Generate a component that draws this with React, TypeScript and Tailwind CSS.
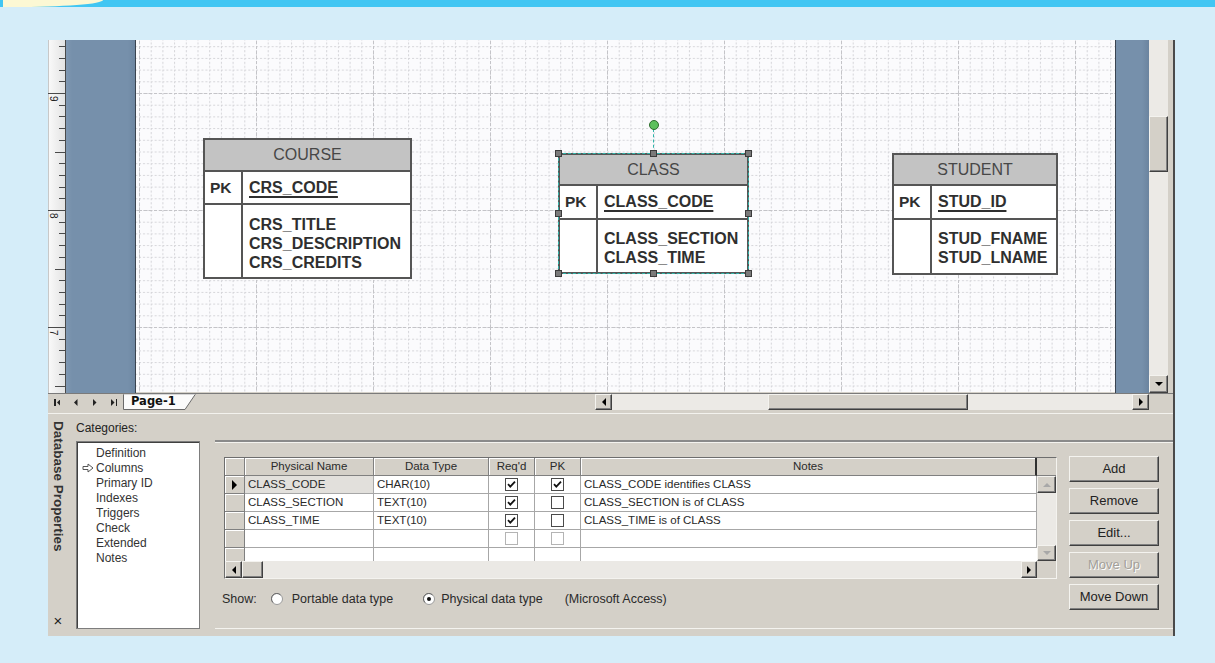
import React from "react";

const UI = "font-[family-name:'Liberation_Sans',Arial,sans-serif]";

/* ---------- small drawing helpers ---------- */

function Tri({ dir, color = "#000", s = 4 }: { dir: "up" | "down" | "left" | "right"; color?: string; s?: number }) {
  const pts =
    dir === "down"
      ? `0,0 ${2 * s},0 ${s},${s}`
      : dir === "up"
      ? `0,${s} ${2 * s},${s} ${s},0`
      : dir === "right"
      ? `0,0 ${s},${s} 0,${2 * s}`
      : `${s},0 0,${s} ${s},${2 * s}`;
  const w = dir === "up" || dir === "down" ? 2 * s : s;
  const h = dir === "up" || dir === "down" ? s : 2 * s;
  return (
    <svg width={w} height={h} className="block">
      <polygon points={pts} fill={color} />
    </svg>
  );
}

function Btn3d({ className = "", children }: { className?: string; children?: React.ReactNode }) {
  return (
    <div
      className={`flex items-center justify-center bg-[#d4d0c8] border border-t-[#f4f3ef] border-l-[#f4f3ef] border-r-[#404040] border-b-[#404040] shadow-[inset_-1px_-1px_0_#808080] ${className}`}
    >
      {children}
    </div>
  );
}

/* ---------- vertical ruler ---------- */

function Ruler() {
  const ticks: React.ReactNode[] = [];
  const base = 53;
  for (let i = -5; i <= 27; i++) {
    const y = Math.round(base + i * 11.7) + 0.5;
    if (y < 0 || y > 353) continue;
    const m = ((i % 10) + 10) % 10;
    const x1 = m === 0 ? 0 : m === 5 ? 7 : 11;
    ticks.push(<line key={i} x1={x1} x2={17} y1={y} y2={y} stroke="#4a4a4a" />);
  }
  const labels = [
    { y: 56, t: "9" },
    { y: 173, t: "8" },
    { y: 290, t: "7" },
  ];
  return (
    <svg width="18" height="353" className="block shrink-0">
      <defs>
        <linearGradient id="rulerFill" x1="0" x2="1">
          <stop offset="0" stopColor="#fafafa" />
          <stop offset="1" stopColor="#e2e2e2" />
        </linearGradient>
      </defs>
      <rect width="18" height="353" fill="url(#rulerFill)" />
      <line x1="0.5" x2="0.5" y1="0" y2="353" stroke="#c8c8c8" />
      <line x1="17.5" x2="17.5" y1="0" y2="353" stroke="#4a4a4a" />
      {ticks}
      {labels.map((l) => (
        <text
          key={l.t}
          x={2}
          y={l.y}
          fontSize="10"
          fill="#222"
          fontFamily="Liberation Sans, Arial, sans-serif"
          transform={`rotate(90 2 ${l.y})`}
        >
          {l.t}
        </text>
      ))}
    </svg>
  );
}

/* ---------- drawing page grid ---------- */

function PageGrid() {
  return (
    <svg className="absolute inset-0" width="979" height="352">
      <defs>
        <pattern id="minorGrid" width="11.7" height="11.7" x="3" y="53" patternUnits="userSpaceOnUse">
          <path d="M0 0.5H11.7M0.5 0V11.7" stroke="#d4d4d8" strokeDasharray="2 2" fill="none" />
        </pattern>
        <pattern id="majorGrid" width="117" height="117" x="3" y="53" patternUnits="userSpaceOnUse">
          <path d="M0 0.5H117M0.5 0V117" stroke="#c4c4c8" strokeDasharray="3 2" fill="none" />
        </pattern>
      </defs>
      <rect width="979" height="352" fill="#fbfbfd" />
      <rect width="979" height="352" fill="url(#minorGrid)" />
      <rect width="979" height="352" fill="url(#majorGrid)" />
    </svg>
  );
}

/* ---------- entity box ---------- */

type EntityProps = {
  name: string;
  pk: string;
  attrs: string[];
  left: string;
  top: string;
  width: string;
  height: string;
  headH: string;
  pkH: string;
  pkColW: string;
  attrPad: string;
  selected?: boolean;
};

function Handle({ className }: { className: string }) {
  return <div className={`absolute h-[7px] w-[7px] bg-[#7a7a7a] border border-[#3c3c3c] ${className}`} />;
}

function Entity(p: EntityProps) {
  return (
    <div className={`absolute ${p.left} ${p.top} ${p.width} ${p.height}`}>
      <div className="flex h-full w-full flex-col border-2 border-[#555] bg-white text-[#2f2f2f]">
        <div className={`${p.headH} flex items-center justify-center border-b-2 border-[#555] bg-[#c3c3c3] text-[16px] text-[#474747]`}>
          {p.name}
        </div>
        <div className={`${p.pkH} flex border-b-2 border-[#555]`}>
          <div className={`${p.pkColW} flex items-center border-r-2 border-[#555] pl-[5px] text-[15.5px] font-bold`}>PK</div>
          <div className="flex items-center pl-[6px] text-[16px] font-bold underline decoration-2 underline-offset-[3px]">
            {p.pk}
          </div>
        </div>
        <div className="flex flex-1">
          <div className={`${p.pkColW} border-r-2 border-[#555]`} />
          <div className={`flex flex-col pl-[6px] ${p.attrPad} text-[16px] font-bold leading-[19px]`}>
            {p.attrs.map((a) => (
              <span key={a}>{a}</span>
            ))}
          </div>
        </div>
      </div>
      {p.selected && (
        <>
          <div className="pointer-events-none absolute inset-0 border border-dashed border-[#2fb3a8]" />
          <div className="absolute left-[95px] top-[-24px] h-[24px] border-l border-dashed border-[#2fb3a8]" />
          <div className="absolute left-[91px] top-[-33px] h-[10px] w-[10px] rounded-full border border-[#2d6b2d] bg-[#5cc05c]" />
          <Handle className="left-[-3px] top-[-3px]" />
          <Handle className="left-[92px] top-[-3px]" />
          <Handle className="right-[-3px] top-[-3px]" />
          <Handle className="left-[-3px] top-[57px]" />
          <Handle className="right-[-3px] top-[57px]" />
          <Handle className="left-[-3px] bottom-[-3px]" />
          <Handle className="left-[92px] bottom-[-3px]" />
          <Handle className="right-[-3px] bottom-[-3px]" />
        </>
      )}
    </div>
  );
}

/* ---------- data grid pieces ---------- */

function Check({ on, dim }: { on?: boolean; dim?: boolean }) {
  return (
    <svg width="13" height="13" className="block">
      <rect x="0.5" y="0.5" width="12" height="12" fill="#fff" stroke={dim ? "#b4b4b4" : "#4a4a4a"} />
      {on && <path d="M3 6.2 L5.3 8.6 L10 3.6" stroke="#111" strokeWidth="1.8" fill="none" />}
    </svg>
  );
}

const W = { sel: "w-[20px]", name: "w-[129px]", type: "w-[115px]", req: "w-[46px]", pk: "w-[46px]", notes: "w-[456px]" };

function HCell({ w, children, last }: { w: string; children?: React.ReactNode; last?: boolean }) {
  return (
    <div
      className={`${w} flex h-full items-center justify-center bg-[#d4d0c8] border-b border-b-[#808080] shadow-[inset_1px_1px_0_#fff] ${
        last ? "border-r-2 border-r-[#303030]" : "border-r border-r-[#808080]"
      }`}
    >
      {children}
    </div>
  );
}

function Cell({ w, children, center, shade }: { w: string; children?: React.ReactNode; center?: boolean; shade?: boolean }) {
  return (
    <div
      className={`${w} flex h-full items-center border-b border-r border-[#a7a7a7] ${shade ? "bg-[#e2e0dc]" : "bg-white"} ${
        center ? "justify-center" : "pl-[3px]"
      }`}
    >
      {children}
    </div>
  );
}

function SelCell({ mark }: { mark?: boolean }) {
  return (
    <div className={`${W.sel} flex h-full items-center justify-center bg-[#d4d0c8] border-b border-r border-[#808080] shadow-[inset_1px_1px_0_#fff]`}>
      {mark && <Tri dir="right" s={5} />}
    </div>
  );
}

type Row = { name: string; type: string; req: boolean; pk: boolean; notes: string; dim?: boolean; mark?: boolean };

const rows: Row[] = [
  { name: "CLASS_CODE", type: "CHAR(10)", req: true, pk: true, notes: "CLASS_CODE identifies CLASS", mark: true },
  { name: "CLASS_SECTION", type: "TEXT(10)", req: true, pk: false, notes: "CLASS_SECTION is of CLASS" },
  { name: "CLASS_TIME", type: "TEXT(10)", req: true, pk: false, notes: "CLASS_TIME is of CLASS" },
  { name: "", type: "", req: false, pk: false, notes: "", dim: true },
];

function ColumnGrid() {
  return (
    <div className="flex h-[122px] w-[833px] flex-col border border-t-[#6e6e6e] border-l-[#6e6e6e] border-r-[#f4f3ef] border-b-[#f4f3ef] text-[11.5px] text-[#2a2a2a]">
      <div className="flex h-[103px]">
        <div className="flex w-[812px] flex-col overflow-hidden">
          <div className="flex h-[18px] shrink-0">
            <HCell w={W.sel} />
            <HCell w={W.name}>Physical Name</HCell>
            <HCell w={W.type}>Data Type</HCell>
            <HCell w={W.req}>Req'd</HCell>
            <HCell w={W.pk}>PK</HCell>
            <HCell w={W.notes} last>
              Notes
            </HCell>
          </div>
          {rows.map((r, i) => (
            <div key={i} className="flex h-[18px] shrink-0">
              <SelCell mark={r.mark} />
              <Cell w={W.name} shade={r.mark}>
                {r.name}
              </Cell>
              <Cell w={W.type}>{r.type}</Cell>
              <Cell w={W.req} center>
                <Check on={r.req} dim={r.dim} />
              </Cell>
              <Cell w={W.pk} center>
                <Check on={r.pk} dim={r.dim} />
              </Cell>
              <Cell w={W.notes}>{r.notes}</Cell>
            </div>
          ))}
          <div className="flex h-[13px] shrink-0">
            <div className={`${W.sel} h-full bg-[#d4d0c8] border-r border-[#808080] shadow-[inset_1px_1px_0_#fff]`} />
            <div className={`${W.name} h-full border-r border-[#a7a7a7] bg-white`} />
            <div className={`${W.type} h-full border-r border-[#a7a7a7] bg-white`} />
            <div className={`${W.req} h-full border-r border-[#a7a7a7] bg-white`} />
            <div className={`${W.pk} h-full border-r border-[#a7a7a7] bg-white`} />
            <div className={`${W.notes} h-full bg-white`} />
          </div>
        </div>
        {/* vertical scroll bar of the grid */}
        <div className="flex w-[19px] flex-col bg-[#ebe9e5]">
          <div className="h-[18px] bg-[#d4d0c8] border-b border-[#808080]" />
          <Btn3d className="h-[17px] w-[19px]">
            <Tri dir="up" color="#a8a8a8" s={4} />
          </Btn3d>
          <div className="flex-1" />
          <Btn3d className="h-[16px] w-[19px]">
            <Tri dir="down" color="#a8a8a8" s={4} />
          </Btn3d>
        </div>
      </div>
      {/* horizontal scroll bar of the grid */}
      <div className="flex h-[17px] bg-[#ebe9e5]">
        <Btn3d className="h-full w-[17px]">
          <Tri dir="left" s={4} />
        </Btn3d>
        <Btn3d className="h-full w-[21px]" />
        <div className="flex-1" />
        <Btn3d className="h-full w-[16px]">
          <Tri dir="right" s={4} />
        </Btn3d>
        <div className="h-full w-[19px] bg-[#d4d0c8]" />
      </div>
    </div>
  );
}

function Radio({ on }: { on?: boolean }) {
  return (
    <svg width="12" height="12" className="block">
      <circle cx="6" cy="6" r="5.5" fill="#fff" stroke="#9a9a9a" />
      <path d="M2 9.5 A5 5 0 0 1 9.5 2" stroke="#6a6a6a" fill="none" />
      {on && <circle cx="6" cy="6" r="2" fill="#111" />}
    </svg>
  );
}

/* ---------- page ---------- */

const categories = ["Definition", "Columns", "Primary ID", "Indexes", "Triggers", "Check", "Extended", "Notes"];

export default function App() {
  return (
    <div className={`relative h-[663px] w-[1215px] overflow-hidden bg-[#d5edf9] ${UI}`}>
      {/* header strip */}
      <div className="relative h-[7px] bg-[#41c6f3]">
        <div className="absolute left-[3px] top-0 h-[7px] w-[100px] rounded-br-[90px_7px] bg-[#fcf8d4]" />
      </div>

      <div className="pl-[48px] pt-[33px]">
        <div className="flex h-[596px] w-[1127px] flex-col border-r-2 border-[#4a4a4a] bg-[#d4d0c8]">
          {/* drawing area */}
          <div className="flex h-[353px]">
            <Ruler />
            <div className="w-[70px] border-r border-[#39434f] bg-[linear-gradient(90deg,#8098b2_0px,#7690ab_6px,#7690ab_62px,#6d86a1_100%)]" />
            <div className="relative w-[979px] overflow-hidden">
              <PageGrid />
              <Entity
                name="COURSE"
                pk="CRS_CODE"
                attrs={["CRS_TITLE", "CRS_DESCRIPTION", "CRS_CREDITS"]}
                left="left-[67px]"
                top="top-[98px]"
                width="w-[209px]"
                height="h-[141px]"
                headH="h-[32px]"
                pkH="h-[33px]"
                pkColW="w-[38px]"
                attrPad="pt-[10px]"
              />
              <Entity
                name="CLASS"
                pk="CLASS_CODE"
                attrs={["CLASS_SECTION", "CLASS_TIME"]}
                left="left-[422px]"
                top="top-[113px]"
                width="w-[191px]"
                height="h-[121px]"
                headH="h-[31px]"
                pkH="h-[34px]"
                pkColW="w-[38px]"
                attrPad="pt-[9px]"
                selected
              />
              <Entity
                name="STUDENT"
                pk="STUD_ID"
                attrs={["STUD_FNAME", "STUD_LNAME"]}
                left="left-[756px]"
                top="top-[113px]"
                width="w-[166px]"
                height="h-[122px]"
                headH="h-[31px]"
                pkH="h-[34px]"
                pkColW="w-[38px]"
                attrPad="pt-[9px]"
              />
            </div>
            <div className="w-[34px] border-l border-[#39434f] bg-[linear-gradient(90deg,#7690ab_0px,#7690ab_26px,#6b849f_100%)]" />
            {/* vertical scroll bar */}
            <div className="flex w-[19px] flex-col bg-[#eceae6]">
              <div className="h-[76px]" />
              <Btn3d className="h-[56px] w-[19px]" />
              <div className="flex-1" />
              <Btn3d className="h-[18px] w-[19px]">
                <Tri dir="down" s={4} />
              </Btn3d>
            </div>
            <div className="w-[5px] bg-[#d4d0c8]" />
          </div>

          {/* page tabs + horizontal scroll bar */}
          <div className="flex h-[17px] border-t border-[#7a7a7a]">
            <div className="flex w-[75px] items-center pl-[6px]">
              <div className="flex w-[20px] items-center gap-[1px]">
                <div className="h-[7px] w-[1.5px] bg-[#222]" />
                <Tri dir="left" color="#222" s={3.5} />
              </div>
              <div className="flex w-[19px] items-center">
                <Tri dir="left" color="#222" s={3.5} />
              </div>
              <div className="flex w-[18px] items-center">
                <Tri dir="right" color="#222" s={3.5} />
              </div>
              <div className="flex items-center gap-[1px]">
                <Tri dir="right" color="#222" s={3.5} />
                <div className="h-[7px] w-[1.5px] bg-[#222]" />
              </div>
            </div>
            <div className="relative flex h-full w-[73px] items-center pl-[8px]">
              <svg className="absolute inset-0" width="73" height="16">
                <polygon points="0.5,0 72.5,0 62,15.5 0.5,15.5" fill="#fbfbfb" stroke="#6a6a6a" />
                <line x1="0.5" x2="72.5" y1="0" y2="0" stroke="#fbfbfb" />
              </svg>
              <span className="relative font-[family-name:'DejaVu_Sans',sans-serif] text-[11.5px] font-bold text-[#111]">Page-1</span>
            </div>
            <div className="w-[399px]" />
            <div className="flex w-[554px] bg-[#eceae6]">
              <Btn3d className="h-full w-[17px]">
                <Tri dir="left" s={4} />
              </Btn3d>
              <div className="w-[156px]" />
              <Btn3d className="h-full w-[200px]" />
              <div className="flex-1" />
              <Btn3d className="h-full w-[17px]">
                <Tri dir="right" s={4} />
              </Btn3d>
            </div>
            <div className="w-[24px]" />
          </div>

          {/* splitter */}
          <div className="h-[8px] pt-[3px]">
            <div className="h-[1px] bg-[#f3f2ee]" />
          </div>

          {/* properties panel */}
          <div className="flex h-[218px] text-[#222]">
            <div className="flex w-[20px] flex-col items-center justify-between pb-[8px] pt-[3px]">
              <span className="text-[13.5px] font-bold text-[#333] [writing-mode:vertical-rl]">Database Properties</span>
              <span className="text-[15px] leading-none">×</span>
            </div>
            <div className="ml-[8px] flex w-[124px] flex-col">
              <div className="flex h-[23px] items-center pb-[3px] text-[12px]">Categories:</div>
              <div className="h-[188px] border border-[#7d7d7d] bg-white pt-[3px] shadow-[inset_1px_1px_0_#404040]">
                {categories.map((c) => (
                  <div key={c} className="relative flex h-[15px] items-center pl-[19px] text-[12px] text-[#333]">
                    {c === "Columns" && (
                      <svg className="absolute left-[5px] top-[3px]" width="12" height="10">
                        <path d="M1 3.5H6V1L11 5L6 9V6.5H1Z" fill="#fff" stroke="#555" />
                      </svg>
                    )}
                    {c}
                  </div>
                ))}
              </div>
            </div>
            <div className="ml-[15px] mt-[23px] flex h-[188px] flex-1 border-b border-t border-b-[#f4f3ef] border-t-[#8a8a8a] shadow-[inset_0_1px_0_#f4f3ef,0_-1px_0_#8a8a8a]">
              <div className="flex w-[845px] flex-col pl-[9px] pt-[15px]">
                <ColumnGrid />
                <div className="mt-[13px] flex h-[14px] items-center text-[12.5px] text-[#2a2a2a]">
                  <span className="ml-[-2px]">Show:</span>
                  <span className="ml-[14px]">
                    <Radio />
                  </span>
                  <span className="ml-[9px]">Portable data type</span>
                  <span className="ml-[30px]">
                    <Radio on />
                  </span>
                  <span className="ml-[6px]">Physical data type</span>
                  <span className="ml-[22px]">(Microsoft Access)</span>
                </div>
              </div>
              <div className="ml-[9px] flex w-[90px] flex-col gap-[6px] pt-[14px] text-[13px] text-[#222]">
                <Btn3d className="h-[26px] w-[90px]">Add</Btn3d>
                <Btn3d className="h-[26px] w-[90px]">Remove</Btn3d>
                <Btn3d className="h-[26px] w-[90px]">Edit...</Btn3d>
                <Btn3d className="h-[26px] w-[90px]">
                  <span className="text-[#a3a09a] [text-shadow:1px_1px_0_#fff]">Move Up</span>
                </Btn3d>
                <Btn3d className="h-[26px] w-[90px]">Move Down</Btn3d>
              </div>
            </div>
          </div>
        </div>
      </div>
    </div>
  );
}
